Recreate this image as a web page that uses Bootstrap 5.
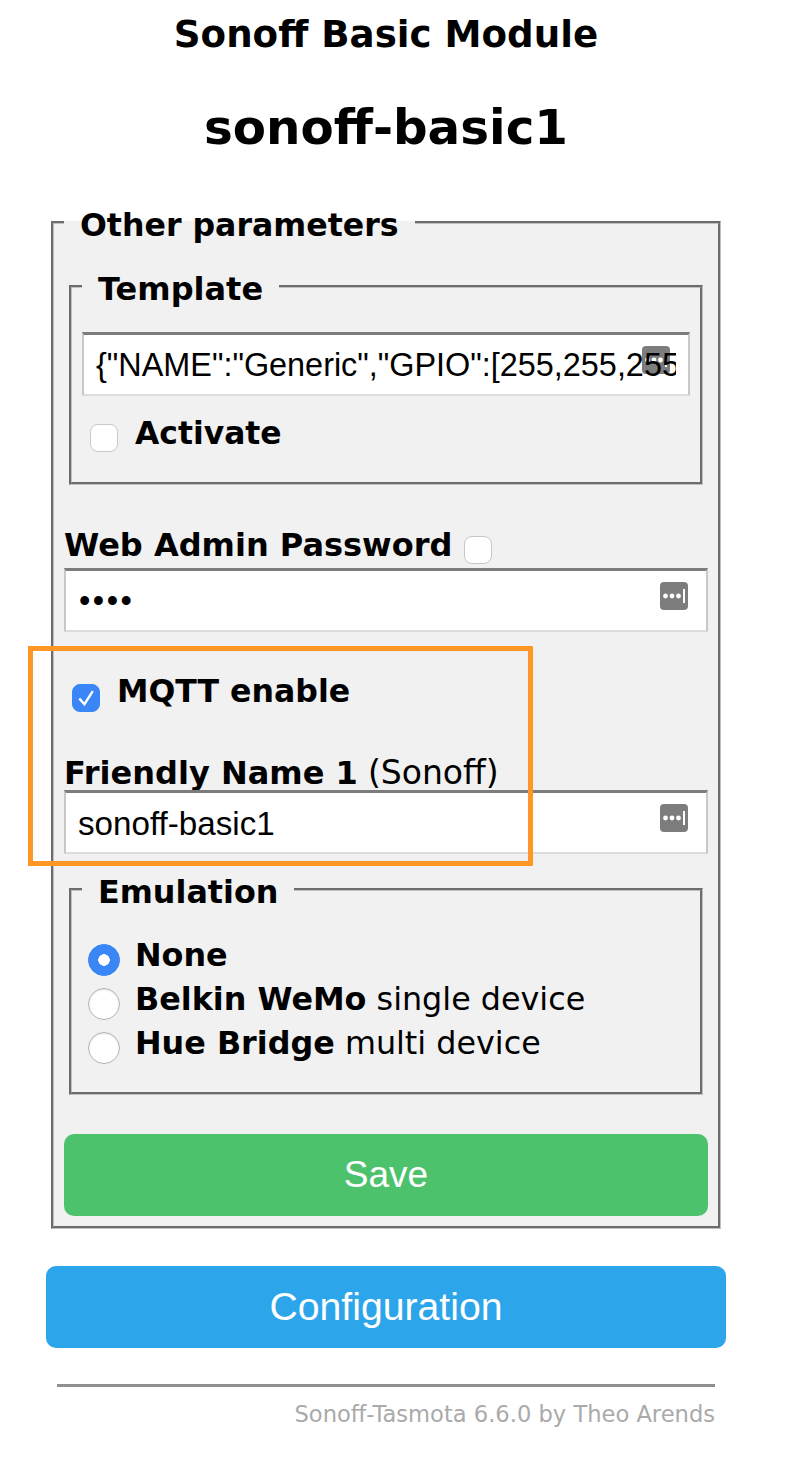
<!doctype html>
<html lang="en"><head><meta charset="utf-8">
<title>Sonoff Basic Module</title>
<link href="https://cdn.jsdelivr.net/npm/bootstrap@5.3.0/dist/css/bootstrap.min.css" rel="stylesheet">
<style>
html,body{background:#fff;color:#000}
body{font-family:"DejaVu Sans",Verdana,sans-serif;font-size:32px;line-height:44px;overflow:hidden}
.page{width:680px;margin-left:46px;position:relative}
.title-a{font-size:37.2px;font-weight:700;line-height:44px;padding-top:12px;text-align:center}
.title-b{font-size:48.4px;font-weight:700;line-height:56px;margin-top:43px;text-align:center}
fieldset.gbox{min-width:0;background:#f1f1f1;border:3px groove #c0c0c0;padding:0 10px}
fieldset.gbox legend{float:none;width:auto;font-size:32px;font-weight:700;line-height:32px;margin:0;padding:6px 16px 0}
fieldset.outerbox{margin:48px 5px 0;padding-bottom:10px}
fieldset.outerbox>legend{font-size:31.6px}
fieldset.innerbox{margin:0 5px;padding-bottom:28px}
fieldset.tpl{margin-top:26px}
fieldset.emu{margin-top:16px}
fieldset.emu>legend{font-size:31.8px}
.fieldwrap{position:relative;background:#fff;height:64px}
.fieldwrap .form-control{position:relative;z-index:1;height:64px;background:transparent;font-family:"Liberation Sans",Arial,sans-serif;font-size:32.4px;line-height:38px;color:#000;padding:2px 12px 0;border-style:solid;border-width:3px 2px 2px;border-color:#7c7c7c #c8c8c8 #dcdcdc;border-radius:0;box-shadow:none}
.fieldwrap .pw-text{letter-spacing:2.5px;padding-left:13px}
.fieldwrap .name-text{font-size:33.2px}
.pw-ico{position:absolute;width:28px;height:28px;top:14px;right:20px}
.tpl-field{margin-top:27px}
.chk{width:28px;height:28px;margin:14px 0 0;background-color:#fff;border:1px solid #c8c8c8;border-radius:6px;flex:none}
.chk:checked{background-color:#3b86f7;border-color:#3b86f7;background-size:100% 100%;background-image:url("data:image/svg+xml,%3Csvg xmlns='http://www.w3.org/2000/svg' viewBox='0 0 28 28'%3E%3Cpath d='M6.8 14.5l5.5 6.2 9-14' fill='none' stroke='%23fff' stroke-width='2.6'/%3E%3C/svg%3E")}
.rad{width:32px;height:32px;margin:12px 0 0;flex:none;background-color:#fff;border:1px solid #b4b4b4;box-shadow:inset 0 1px 2px rgba(0,0,0,.12)}
.rad:checked{background-color:#3b86f7;border-color:#3b86f7;box-shadow:none;background-size:auto;background-image:radial-gradient(circle,#fff 0 5.5px,transparent 6px)}
.chkrow{display:flex;align-items:flex-start;gap:17px;margin-left:8px;height:44px}
.chkrow b,.lbl-pw span,.radrow span{padding-top:1px}
.activate{margin-top:14px;font-size:31.4px}
.mqtt{margin-top:36px;font-size:31.6px}
.mqtt .chk{margin-top:16px}
.lbl-pw{display:flex;align-items:flex-start;gap:12px;font-weight:700;margin-top:37px;height:44px;margin-bottom:2px}
.lbl-name{line-height:36px;height:36px;padding-top:1px;margin-top:42px}
.name-note{font-size:33px}
.radrow{display:flex;align-items:flex-start;gap:15px;height:44px;margin-left:6px;font-size:31.8px}
.radrow.first{margin-top:24px}
.btn-s,.btn-c{display:block;width:100%;height:82px;border:0;border-radius:10px;color:#fff;font-family:"Liberation Sans",Arial,sans-serif;font-size:37px;line-height:82px;padding:0;text-align:center}
.btn-s{background:#4dc26d;margin-top:39px}
.btn-s:hover{background:#4dc26d;color:#fff}
.btn-c{background:#2ca5eb;margin-top:37px;font-size:39.2px}
.btn-c:hover{background:#2ca5eb;color:#fff}
.rule{border:0;border-top:3px solid #8f8f8f;margin:36px 11px 0;opacity:1;width:658px}
.foot{font-size:22.6px;color:#aaa;text-align:right;line-height:30px;margin:12px 11px 0 0}
.note-frame{position:absolute;left:-18px;top:646px;width:505px;height:220px;border:5px solid #ff9726;pointer-events:none;z-index:5}
</style></head>
<body>
<div class="page">
<div class="title-a">Sonoff Basic Module</div>
<div class="title-b">sonoff-basic1</div>
<form>
<fieldset class="gbox outerbox">
<legend>Other parameters</legend>
<fieldset class="gbox innerbox tpl">
<legend>Template</legend>
<div class="fieldwrap tpl-field">
<svg class="pw-ico" viewBox="0 0 28 28"><rect width="28" height="28" rx="4" fill="#7d7d7d"/><circle cx="5.5" cy="14" r="2.4" fill="#fff"/><circle cx="12" cy="14" r="2.4" fill="#fff"/><circle cx="18.5" cy="14" r="2.4" fill="#fff"/><rect x="23" y="7" width="2" height="14" fill="#fff"/></svg>
<input class="form-control" type="text" value='{"NAME":"Generic","GPIO":[255,255,255,255,255,255,255,255,255,255,255,255,255],"FLAG":15,"BASE":18}'>
</div>
<div class="chkrow activate"><input class="form-check-input chk" type="checkbox"><b>Activate</b></div>
</fieldset>
<div class="lbl-pw"><span>Web Admin Password</span><input class="form-check-input chk" type="checkbox"></div>
<div class="fieldwrap">
<svg class="pw-ico" viewBox="0 0 28 28"><rect width="28" height="28" rx="4" fill="#7d7d7d"/><circle cx="5.5" cy="14" r="2.4" fill="#fff"/><circle cx="12" cy="14" r="2.4" fill="#fff"/><circle cx="18.5" cy="14" r="2.4" fill="#fff"/><rect x="23" y="7" width="2" height="14" fill="#fff"/></svg>
<input class="form-control pw-text" type="password" value="abcd">
</div>
<div class="chkrow mqtt"><input class="form-check-input chk" type="checkbox" checked><b>MQTT enable</b></div>
<div class="lbl-name"><b>Friendly Name 1</b> <span class="name-note">(Sonoff)</span></div>
<div class="fieldwrap">
<svg class="pw-ico" viewBox="0 0 28 28"><rect width="28" height="28" rx="4" fill="#7d7d7d"/><circle cx="5.5" cy="14" r="2.4" fill="#fff"/><circle cx="12" cy="14" r="2.4" fill="#fff"/><circle cx="18.5" cy="14" r="2.4" fill="#fff"/><rect x="23" y="7" width="2" height="14" fill="#fff"/></svg>
<input class="form-control name-text" type="text" value="sonoff-basic1">
</div>
<fieldset class="gbox innerbox emu">
<legend>Emulation</legend>
<div class="radrow first"><input class="form-check-input rad" type="radio" name="em" checked><span><b>None</b></span></div>
<div class="radrow"><input class="form-check-input rad" type="radio" name="em"><span><b>Belkin WeMo</b> single device</span></div>
<div class="radrow"><input class="form-check-input rad" type="radio" name="em"><span><b>Hue Bridge</b> multi device</span></div>
</fieldset>
<button type="button" class="btn btn-s">Save</button>
</fieldset>
</form>
<a class="btn btn-c" href="#">Configuration</a>
<hr class="rule">
<div class="foot">Sonoff-Tasmota 6.6.0 by Theo Arends</div>
<div class="note-frame"></div>
</div>
<script src="https://cdn.jsdelivr.net/npm/bootstrap@5.3.0/dist/js/bootstrap.bundle.min.js"></script>
</body></html>
